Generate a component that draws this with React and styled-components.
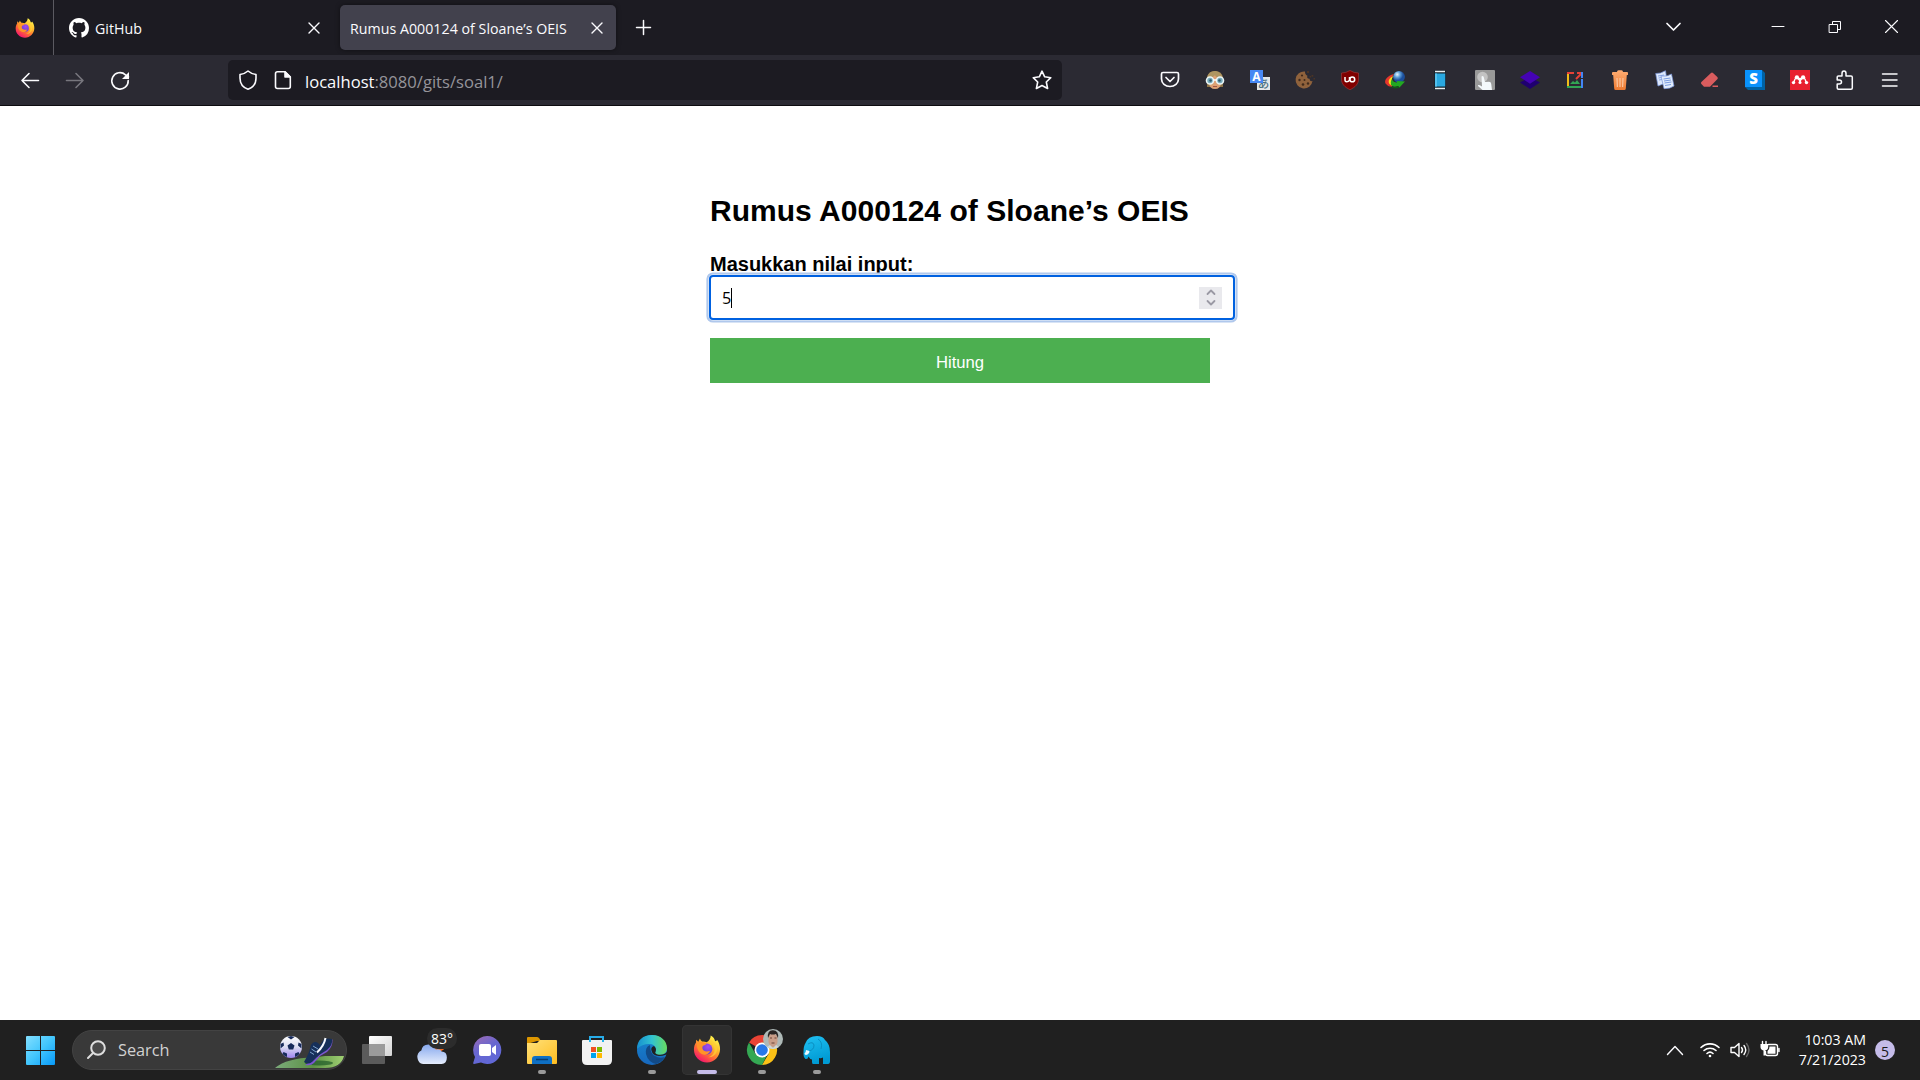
import React from "react";
import styled, { createGlobalStyle } from "styled-components";

const GlobalStyle = createGlobalStyle`
  * { box-sizing: border-box; }
  body { margin: 0; background: #fff; overflow: hidden; }
  svg { display: block; flex: none; overflow: visible; }
`;

const uiFont = `"Open Sans", "Noto Sans", sans-serif`;
const pageFont = `"Liberation Sans", Arial, sans-serif`;

const Screen = styled.div`
  display: flex;
  flex-direction: column;
  width: 1920px;
  height: 1080px;
`;

/* ---------- browser chrome ---------- */
const TabStrip = styled.header`
  display: flex;
  align-items: center;
  height: 55px;
  background: #1c1b22;
  color: #fbfbfe;
  font: 14.2px ${uiFont};
`;
const PinnedTab = styled.div`
  display: flex;
  align-items: center;
  width: 54px;
  height: 55px;
  padding-left: 15px;
  border-right: 1px solid #5b5a61;
`;
const Tab = styled.div`
  display: flex;
  align-items: center;
  gap: 6px;
  width: ${(p) => p.$width}px;
  height: 45px;
  margin-left: ${(p) => p.$offset}px;
  padding: 0 14px 0 ${(p) => p.$pad}px;
  border-radius: 5px;
  background: ${(p) => (p.$active ? "#42414d" : "transparent")};
  box-shadow: ${(p) => (p.$active ? "0 0 5px rgba(0,0,0,.45)" : "none")};
`;
const TabTitle = styled.span`
  flex: 1;
  white-space: nowrap;
  line-height: 20px;
  padding-top: 2px;
  letter-spacing: 0.03px;
`;
const NewTab = styled.div`
  margin-left: 20px;
`;
const WindowControls = styled.div`
  display: flex;
  align-items: center;
  margin-left: auto;
  height: 55px;
  padding: 0 22px 2px 0;
`;
const ControlSlot = styled.div`
  display: flex;
  justify-content: flex-end;
  width: ${(p) => p.$width}px;
`;
const Toolbar = styled.nav`
  display: flex;
  align-items: center;
  height: 51px;
  background: #2b2a33;
  border-bottom: 1px solid #0d0c10;
`;
const NavButtons = styled.div`
  display: flex;
  gap: 25px;
  width: 228px;
  padding-left: 20px;
`;
const UrlBar = styled.div`
  display: flex;
  align-items: center;
  width: 834px;
  height: 40px;
  padding: 0 10px;
  border-radius: 5px;
  background: #1c1b22;
`;
const UrlIcons = styled.div`
  display: flex;
  gap: 15px;
`;
const Url = styled.span`
  flex: 1;
  margin-left: 12px;
  padding-top: 3px;
  color: #95949a;
  font: 16.6px/24px ${uiFont};
`;
const Host = styled.span`
  color: #fbfbfe;
`;
const Extensions = styled.div`
  display: grid;
  grid-auto-flow: column;
  grid-auto-columns: 45px;
  justify-items: center;
  align-items: center;
  margin-left: 85px;
`;

/* ---------- page ---------- */
const Page = styled.main`
  flex: 1;
  display: flex;
  justify-content: center;
  background: #fff;
  font-family: ${pageFont};
  color: #000;
`;
const Form = styled.form`
  display: flex;
  flex-direction: column;
  width: 500px;
  padding-top: 87px;
`;
const Title = styled.h2`
  margin: 0;
  font-size: 30px;
  line-height: 35px;
  letter-spacing: 0.03px;
  white-space: nowrap;
`;
const Label = styled.label`
  margin-top: 25px;
  font-size: 20px;
  font-weight: bold;
  line-height: 23px;
  height: 22px;
`;
const NumberField = styled.div`
  display: flex;
  align-items: center;
  width: 526px;
  height: 45px;
  margin: 0 0 0 -1px;
  padding: 0 11px;
  border: 2px solid #0061e0;
  border-radius: 4px;
  box-shadow: 0 0 0 0.6px #eef3fb, 0 0 0 2.6px #b0c8ec;
  background: #fff;
  font: 16.2px/22px ${uiFont};
`;
const Caret = styled.span`
  width: 1px;
  height: 20px;
  background: #000;
`;
const Spinner = styled.span`
  display: flex;
  align-items: center;
  justify-content: center;
  width: 23px;
  height: 22px;
  margin-left: auto;
  background: #e9e9ed;
`;
const SubmitButton = styled.button`
  height: 45px;
  margin: 18px 0 0;
  padding: 4px 0 0;
  border: 0;
  background: #4caf50;
  color: #fff;
  font: 16.67px ${pageFont};
`;

/* ---------- taskbar ---------- */
const Taskbar = styled.footer`
  display: flex;
  align-items: center;
  height: 60px;
  padding-left: 26px;
  background: #202020;
  color: #fff;
  font-family: ${uiFont};
`;
const SearchBox = styled.div`
  display: flex;
  align-items: center;
  width: 275px;
  height: 40px;
  margin-left: 17px;
  padding-left: 14px;
  border: 1px solid #434343;
  border-radius: 20px;
  background: #393939;
  color: #d2d2d2;
  font-size: 16.3px;
  overflow: hidden;
`;
const SearchText = styled.span`
  flex: 1;
  margin-left: 12px;
`;
const Apps = styled.div`
  display: flex;
  margin-left: 2px;
`;
const AppSlot = styled.div`
  display: flex;
  justify-content: center;
  width: 55px;
`;
const AppTile = styled.div`
  display: flex;
  flex-direction: column;
  align-items: center;
  width: 50px;
  height: 50px;
  padding-top: 5px;
  border-radius: 5px;
  background: ${(p) => (p.$active ? "#2d2d2d" : "transparent")};
  box-shadow: ${(p) => (p.$active ? "inset 0 0 0 1px #343434" : "none")};
`;
const Indicator = styled.span`
  width: ${(p) => (p.$active ? 20 : 8)}px;
  height: 4px;
  border-radius: 2px;
  background: ${(p) => (p.$active ? "#c5bce9" : "#9a9a9a")};
`;
const Tray = styled.div`
  display: flex;
  align-items: center;
  margin-left: auto;
  padding-right: 25px;
`;
const TrayIcons = styled.div`
  display: flex;
  align-items: center;
  gap: 10px;
  margin-left: 17px;
`;
const Clock = styled.div`
  width: 86px;
  text-align: right;
  font-size: 14.2px;
  line-height: 20px;
  white-space: nowrap;
`;
const Badge = styled.div`
  display: flex;
  align-items: center;
  justify-content: center;
  width: 20px;
  height: 20px;
  margin-left: 9px;
  padding-top: 2px;
  border-radius: 50%;
  background: #c5bce9;
  color: #1a1a1a;
  font-size: 14px;
`;

/* ---------- drawings ---------- */
const Line = ({ w = 20, h = 20, sw = 1.6, color = "#fbfbfe", d, children, fill = "none" }) => (
  <svg width={w} height={h} viewBox={`0 0 ${w} ${h}`} fill={fill} stroke={color} strokeWidth={sw} strokeLinecap="round" strokeLinejoin="round">
    {d && <path d={d} />}
    {children}
  </svg>
);

const Firefox = ({ size, id }) => (
  <svg width={size} height={size} viewBox="0 0 30 30">
    <defs>
      <linearGradient id={id + "a"} x1=".8" y1=".1" x2=".25" y2=".95">
        <stop offset="0" stopColor="#fff14a" />
        <stop offset=".35" stopColor="#ffb52a" />
        <stop offset=".65" stopColor="#ff6a36" />
        <stop offset="1" stopColor="#f5166d" />
      </linearGradient>
      <radialGradient id={id + "b"} cx=".6" cy=".3" r=".8">
        <stop offset="0" stopColor="#a44af0" />
        <stop offset="1" stopColor="#5b3fd0" />
      </radialGradient>
    </defs>
    <path fill={`url(#${id}a)`} d="M19 .5c3.1 1.6 4.1 3.8 4.6 6 1.1.4 2-.4 2.1-1.3 2.2 2.8 3.4 6.4 3.3 10.2C28.7 23.500 22.700 29.500 15 29.500S1 23.500 1 15.600c0-3.200.9-5.700 2.200-7.500L3.300 5l2.400 2.200 1.700-3.400c.5 1.400 1.200 2.500 2.300 3.200 2-.2 3.500.1 4.900.9 2.300-1.400 4.300-3.700 4.400-7.400z" />
    <circle cx="15" cy="15" r="5.8" fill={`url(#${id}b)`} />
    <path fill="#ff9428" d="M4.500 8.500c3-1.400 6.500-1.200 9.900.5-.5 1.700-2.400 2.100-4.100 2.500-.5 1.800-.4 3.700 1.100 5.100 2 1.500 4.600 1 6.900.5-1.300 3.500-5.600 5-9 3.200C5.200 18 3.700 13 4.500 8.500z" />
    <path fill="#ffcf35" d="M19 5c-.7 3.400 3.900 5.600 4.100 10.600.2 4-3 7.300-6.900 8.200 8.700.6 12.500-9.200 7.400-14.500C22 7.500 20.800 6.300 19 5z" opacity=".75" />
  </svg>
);

const GitHub = () => (
  <svg width="20" height="20" viewBox="0 0 16 16" fill="#fff">
    <path d="M8 0C3.580 0 0 3.580 0 8c0 3.540 2.290 6.530 5.470 7.590.4.070.55-.17.55-.38 0-.19-.01-.82-.01-1.490-2.010.37-2.530-.49-2.690-.94-.09-.23-.48-.94-.82-1.130-.28-.15-.68-.52-.01-.53.63-.01 1.080.58 1.230.82.720 1.210 1.870.87 2.330.66.070-.52.280-.87.510-1.070-1.780-.2-3.640-.89-3.640-3.950 0-.87.310-1.590.820-2.150-.08-.2-.36-1.020.08-2.120 0 0 .67-.21 2.200.82.640-.18 1.320-.27 2-.27s1.360.09 2 .27c1.530-1.040 2.200-.82 2.200-.82.440 1.100.160 1.920.080 2.120.510.560.820 1.270.820 2.150 0 3.070-1.870 3.750-3.650 3.950.290.250.540.730.540 1.480 0 1.070-.01 1.930-.01 2.200 0 .21.150.460.550.380A8.010 8.010 0 0 0 16 8c0-4.420-3.580-8-8-8z" />
  </svg>
);
const Close = () => <Line w={10} h={10} sw={1.4} d="M0 0 10 10M10 0 0 10" />;

const Glasses = () => (
  <svg width="20" height="20" viewBox="0 0 20 20">
    <path d="M2 17V8Q3 1 10 1t8 7v9z" fill="#8b7347" />
    <path d="M4 7Q10 3 16 7V13Q15.500 19 10 19T4 13z" fill="#dda174" />
    <path d="M2 8C3 2 7 1 11 1q6 1 7 8-7-1-8-4-2 3-8 3z" fill="#ae9561" />
    <g fill="#75aabb" stroke="#eaf5f6" strokeWidth="1.6"><circle cx="5" cy="10.500" r="3.500" /><circle cx="15" cy="10.500" r="3.500" /></g>
    <path d="M8.500 10h3" stroke="#fff" strokeWidth="1.5" /><path d="M8 16.500h4" stroke="#a65643" />
    <circle cx="5.500" cy="10.500" r="1.300" fill="#315969" /><circle cx="14.500" cy="10.500" r="1.300" fill="#315969" />
  </svg>
);
const GlyphText = styled.text`
  font-family: "Open Sans", "Noto Sans CJK JP", sans-serif;
  font-weight: ${(p) => p.$weight || 700};
  font-size: ${(p) => p.$size}px;
  text-anchor: middle;
`;
const Translate = () => (
  <svg width="20" height="20" viewBox="0 0 20 20">
    <path fill="#e4e7e8" d="M7 7h13v13H7z" />
    <GlyphText x="13.500" y="17.800" $size={11.5} $weight={500} fill="#4a7081">あ</GlyphText>
    <path fill="#4788f4" d="M0 0h13v13H0z" />
    <GlyphText x="6.500" y="10.800" $size={12} fill="#fff">A</GlyphText>
  </svg>
);
const Cookie = () => (
  <svg width="20" height="20" viewBox="0 0 20 20">
    <path fill="#8f623c" d="M10 1.500A8.500 8.500 0 1 0 17.500 11c-2 .5-3-.5-2.800-2.300-2 .2-3-1-2.300-3C10.500 5 10 3.500 10 1.500z" />
    <g fill="#3f2a1c"><circle cx="7" cy="5.500" r="1.100" /><circle cx="4.500" cy="10" r="1.200" /><circle cx="9.500" cy="10" r="1" /><circle cx="8" cy="14.500" r="1.300" /><circle cx="13" cy="13.500" r="1.200" /></g>
    <path fill="#4b3425" d="M12 1h2v2h-2zM16.500 5h1.800v1.800h-1.800zM14.500 6h1.500v1.500h-1.500zM18.500 8H20v1.500h-1.500z" />
  </svg>
);
const Ublock = () => (
  <svg width="20" height="20" viewBox="0 0 20 20">
    <path fill="#800000" stroke="#a83a3a" strokeWidth=".6" d="M10 .5Q14 3 18.500 3v6c0 5-3 8-8.500 10.700C4.500 17 1.500 14 1.500 9V3Q6 3 10 .5z" />
    <path fill="none" stroke="#fff" strokeWidth="1.500" d="M5 7v3.300q0 1.500 1.700 1.500T9.500 10.300V7" />
    <circle cx="12.300" cy="9.400" r="2.400" fill="none" stroke="#fff" strokeWidth="1.500" />
  </svg>
);
const Idm = () => (
  <svg width="20" height="20" viewBox="0 0 20 20">
    <defs><radialGradient id="idm" cx=".35" cy=".3"><stop offset="0" stopColor="#e8f6ff" /><stop offset=".5" stopColor="#5e9fd8" /><stop offset="1" stopColor="#1c4f9c" /></radialGradient></defs>
    <circle cx="14" cy="6.800" r="5.900" fill="url(#idm)" />
    <path d="M9 4C2 6-1 10 .5 13.500q2 3 6 3.500l2-4q-3-1-2-4 .5-3 2.500-5z" fill="#e4362d" />
    <path d="M8.500 6c-4 1.500-6 5-4 8q2 2 5 2l1-3q-3 0-4-2 0-3 2-5z" fill="#f6e11d" />
    <path d="M7 9q1 3.500 5 3.500l0-1.500 8 0.500-5.500 6-1.500-1.500q-4 2-7-1-1-3 1-6z" fill="#22a821" />
    <path d="M4 15.500q4 3 9 .5l1.500 1.500Q8 20 4 15.500z" fill="#0f5a15" />
  </svg>
);
const Phone = () => (
  <svg width="20" height="20" viewBox="0 0 20 20">
    <rect x="4" y=".3" width="12" height="19.400" rx="1.200" fill="#17242d" />
    <path d="M5 1.400h10M5 18.600h10" stroke="#e8eef0" strokeWidth="1.500" />
    <path fill="#29a9e1" d="M5 3.500h10.200v13H5z" /><path fill="#54c0ed" d="M5 3.500h2v13H5z" />
  </svg>
);
const Touch = () => (
  <svg width="20" height="20" viewBox="0 0 20 20">
    <rect width="20" height="20" rx="1" fill="#999" />
    <circle cx="7.500" cy="7" r="5.300" fill="#c3c3c3" />
    <path fill="#f4f9fc" d="M6.500 6.500q1.500-1 2.200.5L10 12l4-.2q2 0 2.200 2L17 20H7.500L3 16q-.5-2 4 .5z" />
  </svg>
);
const Layers = () => (
  <svg width="20" height="20" viewBox="0 0 20 20">
    <path d="M0 12.500 10 7l10 5.500L10 19z" fill="#1f006f" /><path d="M0 7.200 10 1l10 6.200-10 6.500z" fill="#4503b4" />
  </svg>
);
const Picture = () => (
  <svg width="20" height="20" viewBox="0 0 20 20" fill="none" strokeWidth="2">
    <path d="M3 2v15" stroke="#f3bd19" /><path d="M2 17h14" stroke="#31a653" /><path d="M17 9v9" stroke="#4385f5" />
    <path d="M2 3h7" stroke="#e64136" /><path d="m11 9 5-5m-4-1h5" stroke="#e64136" /><path d="M17 2v6" stroke="#4385f5" />
    <path d="m5 14 3-3 2 1.500 2-2.500 3 4z" fill="#31a653" />
  </svg>
);
const Trash = () => (
  <svg width="20" height="20" viewBox="0 0 20 20">
    <defs><linearGradient id="bin" x2="0" y2="1"><stop stopColor="#ffad73" /><stop offset="1" stopColor="#ed7a31" /></linearGradient></defs>
    <path fill="url(#bin)" d="M7 2q0-1.700 1.500-1.700h3Q13 .3 13 2h4q1 0 1 1v2H2V3q0-1 1-1zM3.200 5h13.600l-1 13.500q-.1 1.500-1.500 1.500H5.700q-1.400 0-1.500-1.500z" />
    <path d="m7 8 .4 9M10 8v9M13 8l-.4 9" stroke="#fbc5a0" strokeWidth="1.200" />
  </svg>
);
const Papers = () => (
  <svg width="20" height="20" viewBox="0 0 20 20">
    <path fill="#dce8fc" stroke="#7794da" strokeWidth=".7" d="M.7 3.500Q5 4 10.500.7l1.800 12.500Q7 14 3 16z" />
    <path stroke="#87a5e4" d="m3 6 6-1M3.500 8l6-1M4 10l6-1" />
    <path fill="#e3edfd" stroke="#7794da" strokeWidth=".7" d="M6 6q6 1 10.500-2L19 16q-4 3-10 2.700z" />
    <path stroke="#789ae0" d="m8.500 9 7-1M9 11l7-1M9.500 13l7-1M10 15.500l6-1" />
  </svg>
);
const Eraser = () => (
  <svg width="20" height="20" viewBox="0 0 20 20">
    <path fill="#d95c5e" d="M11 3q1-1 2 0l4.300 4q1 1 .2 2L10 16.800H4L1.400 14q-1-1 0-2zM12.500 15.500H18V17h-5.500z" />
  </svg>
);
const SBox = () => (
  <svg width="20" height="20" viewBox="0 0 20 20">
    <path fill="#0062a4" d="M17 0 20 3v17H3l-3-3z" /><path fill="#0a92fc" d="M0 0h17v17H0z" />
    <GlyphText x="8.500" y="13.800" $size={15} $weight={800} fill="#fff">S</GlyphText>
  </svg>
);
const Mendeley = () => (
  <svg width="20" height="20" viewBox="0 0 20 20">
    <path fill="#e8202f" d="M0 0h20v20H0z" />
    <g fill="#fff"><circle cx="6.900" cy="7.300" r="2.100" /><circle cx="13.100" cy="7.300" r="2.100" /><circle cx="3.500" cy="12.600" r="1.700" /><circle cx="10" cy="12.600" r="1.500" /><circle cx="16.500" cy="12.600" r="1.700" /></g>
    <path d="M4 12Q4.500 8.500 7 7.500q2.500 1.500 3 4.500.5-3 3-4.500 2.500 1 3 4.500" stroke="#fff" strokeWidth="1.300" fill="none" />
    <path fill="#fff" d="M7 6.500 10 8l3-1.500V9l-3 1.500L7 9z" />
  </svg>
);

const WinLogo = () => (
  <svg width="29" height="29" viewBox="0 0 29 29">
    <defs><linearGradient id="win" gradientUnits="userSpaceOnUse" x1="0" y1="0" x2="29" y2="29"><stop stopColor="#83dfff" /><stop offset=".5" stopColor="#42c6fd" /><stop offset="1" stopColor="#0799f8" /></linearGradient></defs>
    <path fill="url(#win)" d="M1 0h13v14H0V1q0-1 1-1zM15 0h13q1 0 1 1v13H15zM0 15h14v14H1q-1 0-1-1zM15 15h14v13q0 1-1 1H15z" />
  </svg>
);
const SoccerArt = () => (
  <svg width="71" height="38" viewBox="0 0 71 38">
    <defs>
      <linearGradient id="turf"><stop stopColor="#7cab7b" /><stop offset=".55" stopColor="#5c9245" /><stop offset="1" stopColor="#9fd072" /></linearGradient>
      <linearGradient id="ball" x2="0" y2="1"><stop stopColor="#fff" /><stop offset=".5" stopColor="#dadcf1" /><stop offset="1" stopColor="#a084f0" /></linearGradient>
    </defs>
    <path d="M0 37Q12 27 38 26.500L50 25h19q-3 12-19 12z" fill="url(#turf)" />
    <ellipse cx="44" cy="32" rx="14" ry="2.500" fill="#1f5a28" opacity=".7" />
    <circle cx="16" cy="16" r="11" fill="url(#ball)" />
    <path fill="#182b5b" d="m16 12 3.500 2.500-1.300 4h-4.400l-1.300-4zM12.500 6l3.500-1 3.500 1L16 8.500zM5.500 13l3-1.500.5 3-3.500 3zM26.500 13l-3-1.500-.5 3 3.500 3zM8.500 21l3.500 1.500V26q-2-.5-4.500-3zM23.500 21 20 22.500V26q2-.5 4.500-3z" />
    <path fill="#7a55d0" d="M30 34q6 1 9-2l6-7 7-4q6-5 5.500-13l-3 6-8 8-8 7z" />
    <path fill="#16305a" d="M29 31q3-5 5-10l2-7q3-5 7-2l2 2 4-6q5-1 8 0 1 6-5 11l-8 5-7 7q-4 3-8 0z" />
    <path d="M50.500 7Q49 15 42 21.500" stroke="#f7faff" strokeWidth="2" fill="none" />
    <path d="m38 15 5 3M36.500 18l4.500 3M35 21l4 2.500" stroke="#7fa4cc" strokeWidth="1" />
  </svg>
);
const TaskView = () => (
  <svg width="34" height="40" viewBox="-2 0 34 40">
    <defs><linearGradient id="tv" x2="1" y2="1"><stop stopColor="#fff" /><stop offset="1" stopColor="#d4d4d4" /></linearGradient></defs>
    <rect x="7" y="6" width="23" height="20" rx="1" fill="url(#tv)" /><rect x="0" y="14" width="23" height="20" rx="1" fill="#5b5b5b" /><path fill="#9b9b9b" d="M7 14h16v12H7z" />
  </svg>
);
const Weather = () => (
  <svg width="50" height="40" viewBox="0 0 50 40">
    <defs><linearGradient id="cl" x2="0" y2="1"><stop stopColor="#86a8ee" /><stop offset="1" stopColor="#e5edfc" /></linearGradient></defs>
    <circle cx="32" cy="15" r="6.500" fill="#f26b21" />
    <path fill="url(#cl)" transform="translate(7.3 .5) scale(.88 1)" d="M10 33.500a7 7 0 0 1-2-13.500Q9 14 16 14q5-1 8.500 5 5-1 6.500 2 6 0 6 6t-6 6.500z" />
    <rect x="20" y="-2" width="30" height="21" rx="10.500" fill="#2c2c2c" />
    <GlyphText x="35" y="13.500" $size={14} $weight={400} fill="#fff">83°</GlyphText>
  </svg>
);
const Meet = () => (
  <svg width="30" height="40" viewBox="0 0 30 40">
    <defs><linearGradient id="meet" x2=".5" y2="1"><stop stopColor="#a06bb2" /><stop offset=".5" stopColor="#6866cf" /><stop offset="1" stopColor="#6168d7" /></linearGradient></defs>
    <path fill="url(#meet)" d="M15 6a14 14 0 1 1-6 26.500L2 34q-1 0-.8-1L3 27A14 14 0 0 1 15 6z" />
    <rect x="7" y="14" width="12" height="12" rx="2" fill="#fff" /><path fill="#fff" d="m20 18 4-3v10l-4-3z" />
  </svg>
);
const Folder = () => (
  <svg width="30" height="40" viewBox="0 0 30 40">
    <defs><linearGradient id="fold" x2="1" y2="1"><stop stopColor="#ffe17a" /><stop offset="1" stopColor="#ffbd20" /></linearGradient></defs>
    <path fill="#dc9600" d="M1 7h9q1 0 2 1l2 3h-4l-10 3V8q0-1 1-1z" />
    <path fill="url(#fold)" d="M0 13h10l3-3h16q1 0 1 1v22q0 1-1 1H1q-1 0-1-1z" />
    <path fill="#0f70c4" d="M5 34v-5q0-3 3-3h14q3 0 3 3v5z" /><path d="M9 29.500h12" stroke="#073d72" strokeWidth="1.500" />
  </svg>
);
const Store = () => (
  <svg width="30" height="40" viewBox="0 0 30 40">
    <path d="M8 14V7h13v7" fill="none" stroke="#27ace8" strokeWidth="2" />
    <path fill="#f2f2f2" d="M1 10h28q1 0 1 1v19q0 5-5 5H5q-5 0-5-5V11q0-1 1-1z" />
    <path fill="#25b6eb" d="M7 10h2v2H7zM20 10h2v2h-2z" />
    <path fill="#f25022" d="M9 17h5v5H9z" /><path fill="#7fba00" d="M15 17h5v5h-5z" /><path fill="#00a4ef" d="M9 23h5v5H9z" /><path fill="#ffb900" d="M15 23h5v5h-5z" />
  </svg>
);
const Edge = () => (
  <svg width="30" height="40" viewBox="0 0 30 40">
    <defs>
      <linearGradient id="ed1"><stop stopColor="#168fd0" /><stop offset=".5" stopColor="#32c3d0" /><stop offset="1" stopColor="#68db5e" /></linearGradient>
      <linearGradient id="ed2" x2="0" y2="1"><stop stopColor="#1687ce" /><stop offset="1" stopColor="#1767bd" /></linearGradient>
    </defs>
    <circle cx="15" cy="20" r="15" fill="url(#ed2)" />
    <path fill="url(#ed1)" d="M0 19C0 10 6 5 15 5s15 6 15 13q0 7-8 7-5 0-5-2 2-1 2-4-1-5-7-5-7 0-12 5z" />
    <path fill="#124a87" d="M13 15q-5 2-4 9 2 8 10 10 6-2 9-7-6 2-10-1-5-2-5-11z" />
    <path fill="#202020" d="M17 16q-3.500 1-2.500 4.500 1 5 7.500 5.500 4 0 6-1l2.200-.8V21.500q-3 4-8.200 3.200-5-.7-3.300-3.500 1-3-1.700-5.200z" />
  </svg>
);
const Chrome = () => (
  <svg width="38" height="40" viewBox="-4 0 38 40">
    <path fill="#ea4335" d="M15 20 2 12.500A15 15 0 0 1 28 12.500H15z" />
    <path fill="#fbc116" d="M15 12.500h13A15 15 0 0 1 15 35l6.500-11z" />
    <path fill="#34a853" d="M15 35A15 15 0 0 1 2 12.500L8.500 24l12 0z" />
    <circle cx="15" cy="20" r="7.500" fill="#fff" /><circle cx="15" cy="20" r="5.800" fill="#2878e8" />
    <circle cx="26" cy="9" r="10" fill="#aeb9b7" />
    <path fill="#c99d87" d="M21.500 6q4-5 9 0v6q-1 5-4.500 5t-4.500-5z" /><path fill="#292422" d="M21 8Q20 0 26 .3q6 0 5 7.700l-2-4q-4 1-6 0z" />
    <path d="M23 8h2M27.500 8h2M24.500 13h3" stroke="#684337" /><path fill="#cfd6d5" d="m20 17 3-2 3 3 3-3 3 2q-6 4-12 0z" />
  </svg>
);
const Elephant = () => (
  <svg width="30" height="40" viewBox="0 0 30 40">
    <defs><linearGradient id="ele" x2=".3" y2="1"><stop stopColor="#20c0f2" /><stop offset="1" stopColor="#009bd4" /></linearGradient></defs>
    <path fill="url(#ele)" d="M3.500 13Q6 6 15 6q6 0 8 4 5 4 5 12v9q0 3-2 3h-5v-6.500q-2 1-4 .5v6H11q-1 0-1-2v-2.500q-2 0-3.500-3-.5 3-3 2.500Q1 27 1.500 22 1.500 16 3.500 13z" />
    <path d="M6 14q5-3 6 1 0 5-5 6M16 9q5 3 3 10" fill="none" stroke="#0b8fc2" strokeWidth="1" />
    <path fill="#e8f9ff" d="m4 20 3.500 1q0 3-3.500 4-1.500-.5-1.500-1.500Q4 22.500 4 20z" />
  </svg>
);

const apps = [
  { Icon: TaskView }, { Icon: Weather }, { Icon: Meet },
  { Icon: Folder, open: true }, { Icon: Store }, { Icon: Edge, open: true },
  { Icon: () => <svg width="30" height="40"><g transform="translate(1 5)"><Firefox size={28} id="task" /></g></svg>, open: true, active: true },
  { Icon: Chrome, open: true }, { Icon: Elephant, open: true },
];

const Pocket = () => <Line sw={1.7} d="M3 2.500h14q1.500 0 1.500 1.500v5a8.500 7.500 0 0 1-17 0V4Q1.500 2.500 3 2.500zM6 7.500l4 4 4-4" />;
const Puzzle = () => <Line sw={1.5} d="M7 19.200H3.500Q2.200 19.200 2.200 18v-4H4q2.500 0 2.500-2T4 10H2.200V7Q2.200 6 3.500 6H7V3.500Q7 1 9 1t2 2.500V6h5q1.300 0 1.300 1.300V18q0 1.200-1.300 1.200z" />;
const Menu = () => <Line sw={1.5} d="M2.500 4H17M2.500 10H17M2.500 16H17" />;
const extensions = [Pocket, Glasses, Translate, Cookie, Ublock, Idm, Phone, Touch, Layers, Picture, Trash, Papers, Eraser, SBox, Mendeley, Puzzle, Menu];

export default function App() {
  return (
    <Screen>
      <GlobalStyle />
      <TabStrip>
        <PinnedTab><Firefox size={20} id="tab" /></PinnedTab>
        <Tab $width={279} $offset={0} $pad={15}>
          <GitHub /><TabTitle>GitHub</TabTitle><Close />
        </Tab>
        <Tab $width={276} $offset={7} $pad={10} $active>
          <TabTitle>Rumus A000124 of Sloane’s OEIS</TabTitle><Close />
        </Tab>
        <NewTab><Line w={15} h={15} sw={1.5} d="M7.500.5v14M.5 7.500h14" /></NewTab>
        <WindowControls>
          <ControlSlot $width={15}><Line w={15} h={8} sw={1.7} d="m1 .5 6.500 6.500L14 .5" /></ControlSlot>
          <ControlSlot $width={103}><Line w={12} h={2} sw={1} d="M0 .5h12" /></ControlSlot>
          <ControlSlot $width={57}><Line w={12} h={12} sw={1} d="M.5 3.500h8v8h-8zM3.500 3.500v-3h8v8h-3" /></ControlSlot>
          <ControlSlot $width={57}><Line w={13} h={13} sw={1.1} d="m.5.5 12 12m0-12-12 12" /></ControlSlot>
        </WindowControls>
      </TabStrip>
      <Toolbar>
        <NavButtons>
          <Line sw={1.6} d="M18.500 10.500H2M9 3.500l-7 7 7 7" />
          <Line sw={1.6} color="#77767d" d="M1.500 10.500H18M11 3.500l7 7-7 7" />
          <Line sw={1.6}><path d="M18.200 10.500A8.200 8.200 0 1 1 15.500 4.800L18.500 7" /><path fill="#fbfbfe" stroke="none" d="M19 2v7h-7z" /></Line>
        </NavButtons>
        <UrlBar>
          <UrlIcons>
            <Line sw={1.6} d="M10 1Q13 3.700 18 4.500V8c0 5.500-3 9.500-8 11.300C5 17.500 2 13.500 2 8V4.500Q7 3.700 10 1z" />
            <Line sw={1.6}><path d="M4.500 1.800H12L17.300 7v9.500q0 2-2 2H4.500q-2 0-2-2V3.800q0-2 2-2z" /><path fill="#fbfbfe" d="M12 1.800V7h5.300z" /></Line>
          </UrlIcons>
          <Url><Host>localhost</Host>:8080/gits/soal1/</Url>
          <Line sw={1.6} d="m10 1.200 2.700 5.600 6.100.9-4.500 4.300 1.300 6.500-5.600-3-5.600 3L5.700 12 1.200 7.700l6.100-.9z" />
        </UrlBar>
        <Extensions>{extensions.map((Icon, i) => <Icon key={i} />)}</Extensions>
      </Toolbar>
      <Page>
        <Form>
          <Title>Rumus A000124 of Sloane’s OEIS</Title>
          <Label>Masukkan nilai input:</Label>
          <NumberField>
            <span>5</span><Caret />
            <Spinner><Line w={10} h={17} sw={1.8} color="#9a99a4" d="m1.500 5 3.500-3.500L8.500 5M1.500 12 5 15.500 8.500 12" /></Spinner>
          </NumberField>
          <SubmitButton type="button">Hitung</SubmitButton>
        </Form>
      </Page>
      <Taskbar>
        <WinLogo />
        <SearchBox>
          <svg width="19" height="20" viewBox="0 0 19 20" fill="#4a4a4a" stroke="#dedede" strokeWidth="2" strokeLinecap="round"><circle cx="11" cy="8" r="6.800" /><path d="m6 13-5 5" /></svg>
          <SearchText>Search</SearchText>
          <SoccerArt />
        </SearchBox>
        <Apps>
          {apps.map(({ Icon, open, active }, i) => (
            <AppSlot key={i}><AppTile $active={active}><Icon />{open && <Indicator $active={active} />}</AppTile></AppSlot>
          ))}
        </Apps>
        <Tray>
          <Line w={16} h={9} sw={1.4} d="m.5 8.500 7.500-8 7.500 8" />
          <TrayIcons>
            <Line sw={1.6} color="#fff"><path d="M1 7.500a13 13 0 0 1 18 0M4 10.500a9 9 0 0 1 12 0M7 13.500a4.500 4.500 0 0 1 6 0" /><circle cx="10" cy="16" r="1.300" fill="#fff" stroke="none" /></Line>
            <Line sw={1.4} color="#fff" d="M1 7.500h3.500L9 3.500v13l-4.500-4H1zM11.500 7.500q2 2.500 0 5M14 5.500q3.500 4.500 0 9"><path stroke="#666" d="M16.500 3.500q5 6.500 0 13" /></Line>
            <Line sw={1.4} color="#fff"><path d="M8.500 4.500h7q2 0 2 2v7q0 2-2 2H7.500q-2 0-2-2v-2M19 8.500v3" /><path fill="#fff" stroke="none" d="M9.500 6.500h6v7.200h-8V11q2-1 2-4.500zM.5 4h7.700v3q0 2.500-3 3.500v5H3.500v-5Q.5 9.500.5 7z" /><path d="M2.500 1.500V4M6 1.500V4" /></Line>
          </TrayIcons>
          <Clock>10:03 AM<br />7/21/2023</Clock>
          <Badge>5</Badge>
        </Tray>
      </Taskbar>
    </Screen>
  );
}
